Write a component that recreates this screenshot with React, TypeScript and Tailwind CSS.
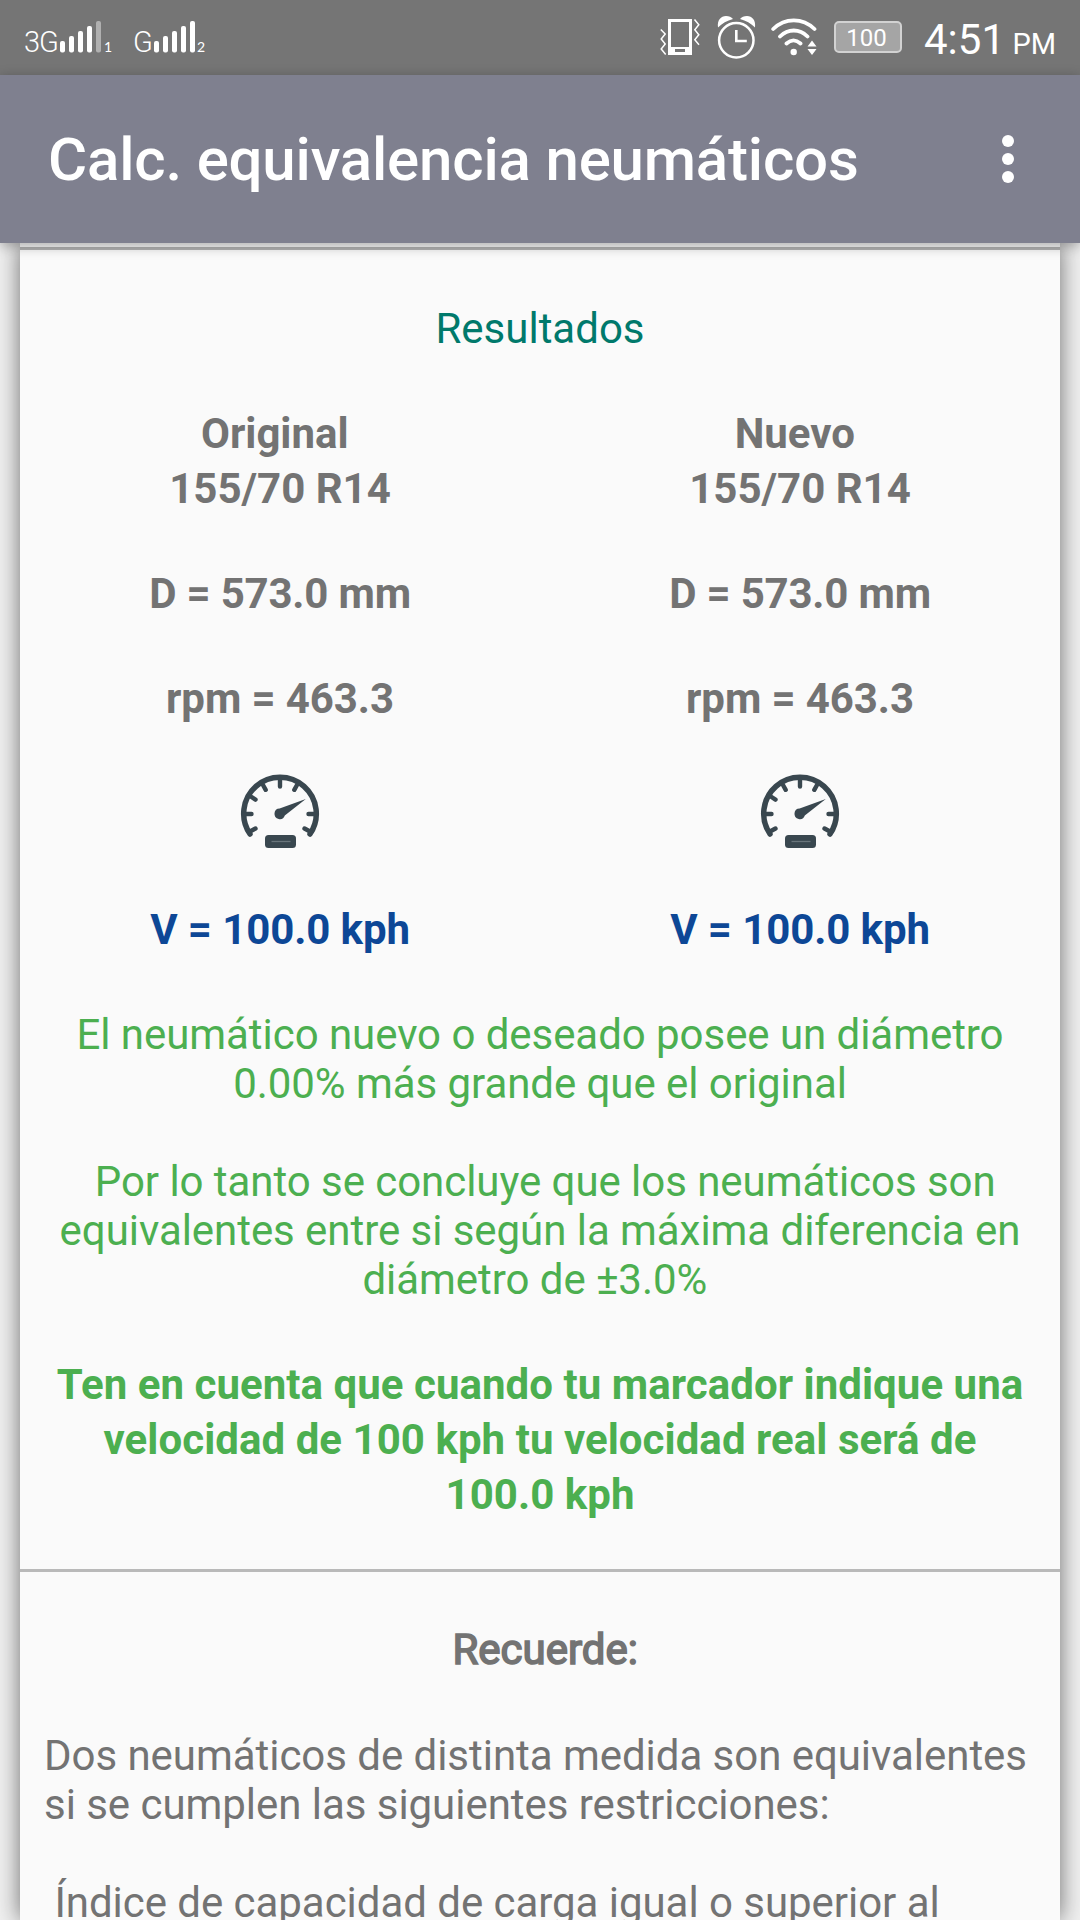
import type { ReactNode } from "react";

type Tyre = {
  title: string;
  size: string;
  diameter: string;
  rpm: string;
  speed: string;
};

const tyres: Tyre[] = [
  { title: "Original\u00a0", size: "155/70 R14", diameter: "D = 573.0 mm", rpm: "rpm = 463.3", speed: "V = 100.0 kph" },
  { title: "Nuevo\u00a0", size: "155/70 R14", diameter: "D = 573.0 mm", rpm: "rpm = 463.3", speed: "V = 100.0 kph" },
];

function SignalBars({ level }: { level: number }) {
  return (
    <svg width="41" height="32" viewBox="0 0 41 32" className="shrink-0">
      {[0, 1, 2, 3, 4].map((i) => (
        <rect
          key={i}
          x={i * 9}
          y={20 - i * 5}
          width="5"
          height={11.5 + i * 5}
          rx="2"
          fill={i < level ? "#fff" : "#b0b0b0"}
        />
      ))}
    </svg>
  );
}

function VibrateIcon() {
  return (
    <svg width="40" height="44" viewBox="0 0 40 44" fill="none" className="shrink-0">
      <path fill="#fff" fillRule="evenodd" d="M8 4h24v36H8zM11 7v25h18V7zM15 34v3h10v-3z" />
      <path stroke="#fff" strokeWidth="1.5" d="M.8 14.5l4.400 4.500-4 5 4 5-4 5 4.500 5.500M34.500 4.500l4.300 5.200-4 5 4 5-4 5 4.200 5" />
    </svg>
  );
}

function AlarmIcon() {
  return (
    <svg width="39" height="44" viewBox="0 0 39 44" fill="none" className="shrink-0">
      <circle cx="19.300" cy="25.300" r="17.200" stroke="#fff" strokeWidth="2.500" />
      <path stroke="#fff" strokeWidth="2.600" d="M19.300 15v11h10.500" />
      <path fill="#fff" d="M1 12.500C0 5 4 1 9 1c3 0 5.500 1.200 7 3C10 5.500 5 8.500 1 12.500zM38 12.500C39 5 35 1 30 1c-3 0-5.500 1.200-7 3 6 1.500 11 4.500 15 8.500z" />
    </svg>
  );
}

function WifiIcon() {
  return (
    <svg width="46" height="44" viewBox="0 0 46 44" fill="none" className="shrink-0">
      <path stroke="#fff" strokeWidth="3.800" strokeLinecap="round" d="M2.200 14C14 2.500 31.500 2.500 43.500 14M9 21.500c8-8 19.500-8 27.500 0M15.500 28.500c4.500-4 9.500-4 14 0" />
      <circle cx="22.700" cy="37" r="3.200" fill="#fff" />
      <path fill="#fff" d="M41 25.500l4.500 6h-9zM41 40l4.500-6h-9z" />
    </svg>
  );
}

function GaugeIcon() {
  return (
    <svg width="80" height="76" viewBox="0 0 80 76" fill="none" stroke="#39474f" className="mx-auto block">
      <path strokeWidth="5.500" strokeLinecap="round" d="M10 60A36.300 36.300 0 1 1 70 60" />
      <path
        strokeWidth="4.400"
        strokeLinecap="round"
        d="M40 5v7.500M23 11l2.700 4.800M57 11l-2.700 4.800M10 22l5.500 3.600M4 40h7.500M76 40h-7.500M10 57.500l5.500-3M70 57.500l-5.500-3"
      />
      <path fill="#39474f" stroke="none" d="M65.800 25L44.800 41.500a5.300 5.300 0 1 1-5.200-7z" />
      <rect x="25" y="61" width="31" height="13" rx="3.500" fill="#39474f" stroke="none" />
      <path stroke="#69757b" strokeWidth="1.300" d="M31.500 67.500h19" />
    </svg>
  );
}

function StatusBar() {
  return (
    <div className="flex h-[75px] items-start bg-[#757575] text-white">
      <span className="mt-[24px] ml-[24px] w-[36px] text-[29px] leading-[36px] font-light tracking-[-1px]">3G</span>
      <div className="mt-[21px]"><SignalBars level={4} /></div>
      <span className="mt-[37px] ml-[3px] w-[29px] font-['Lato'] text-[14px] leading-[20px]">1</span>
      <span className="mt-[24px] w-[20px] text-[29px] leading-[36px] font-light">G</span>
      <div className="mt-[21px] ml-px"><SignalBars level={5} /></div>
      <span className="mt-[37px] ml-[2px] font-['Lato'] text-[14px] leading-[20px]">2</span>

      <div className="mt-[15px] ml-auto flex pr-[17px]">
        <VibrateIcon />
        <div className="mr-[15px] ml-[17px]">
          <AlarmIcon />
        </div>
        <WifiIcon />
      </div>
      <div className="mt-[21px] flex h-8 w-[68px] items-center justify-center rounded-[5px] border-2 border-[#d2d2d2] bg-[#a5a5a5] pt-px pr-[3px] text-[24px] leading-none">
        100
      </div>
      <div className="mt-[15px] ml-[22px] flex w-[156px] items-baseline">
        <span className="text-[42px] leading-[49px]">4:51</span>
        <span className="mr-[24px] ml-auto text-[29px] leading-[34px]">PM</span>
      </div>
    </div>
  );
}

function Toolbar() {
  return (
    <div className="relative z-10 flex h-[168px] items-center justify-between bg-[#7f808f] pr-[66px] pl-12 text-white shadow-[0_3px_12px_rgba(0,0,0,0.32)]">
      <h1 className="pt-[2px] text-[60px] leading-[70px] font-medium tracking-[-0.18px]">Calc. equivalencia neumáticos</h1>
      <svg width="12" height="50" viewBox="0 0 12 50" fill="#fff">
        <circle cx="6" cy="7" r="6" />
        <circle cx="6" cy="25" r="6" />
        <circle cx="6" cy="43" r="6" />
      </svg>
    </div>
  );
}

function TyreColumn({ tyre }: { tyre: Tyre }) {
  return (
    <div className="w-1/2 leading-[55px] font-bold">
      <div>{tyre.title}</div>
      <div>{tyre.size}</div>
      <div className="mt-[50px] tracking-[-0.2px]">{tyre.diameter}</div>
      <div className="mt-[50px] tracking-[-0.1px]">{tyre.rpm}</div>
      <div className="mt-[48px] h-[76px]">
        <GaugeIcon />
      </div>
      <div className="mt-[52px] tracking-[-0.1px] text-[#0d4796]">{tyre.speed}</div>
    </div>
  );
}

function Line({ children }: { children: ReactNode }) {
  return <span className="block whitespace-pre">{children}</span>;
}

export default function App() {
  return (
    <div className="flex h-[1920px] w-[1080px] flex-col overflow-hidden bg-[#f0f0f0] font-['Roboto',sans-serif] text-[42px] leading-[49px] text-[#737373]">
      <StatusBar />
      <Toolbar />

      <main className="mx-5 h-[1677px] bg-[#fafafa] pt-1 text-center shadow-[0_0_22px_rgba(0,0,0,0.55)]">
        <div className="h-[3px] bg-[#b3b3b3]" />

        <section className="pt-[54px]">
          <h2 className="text-[#00796b]">Resultados</h2>
          <div className="mt-[53px] flex">
            {tyres.map((tyre) => (
              <TyreColumn key={tyre.title} tyre={tyre} />
            ))}
          </div>

          <div className="text-[#4caf50]">
            <p className="mt-[53px] tracking-[-0.05px]">
              <Line>El neumático nuevo o deseado posee un diámetro</Line>
              <Line>0.00% más grande que el original</Line>
            </p>
            <p className="mt-[49px] tracking-[-0.05px]">
              <Line> Por lo tanto se concluye que los neumáticos son</Line>
              <Line>equivalentes entre si según la máxima diferencia en</Line>
              <Line>diámetro de ±3.0% </Line>
            </p>
            <p className="mt-[53px] leading-[55px] font-bold tracking-[0.04px]">
              <Line>Ten en cuenta que cuando tu marcador indique una</Line>
              <Line>velocidad de 100 kph tu velocidad real será de</Line>
              <Line>100.0 kph</Line>
            </p>
          </div>
        </section>

        <div className="mt-[47px] h-[3px] bg-[#b9b9b9]" />

        <section className="pt-[50px]">
          {/* lighter than the bold weight: regular glyphs thickened by a stroke */}
          <h2 className="leading-[55px] [-webkit-text-stroke:1.6px_#737373]">&nbsp;Recuerde:</h2>
          <div className="mt-[54px] pl-[24px] text-left tracking-[-0.04px]">
            <Line>Dos neumáticos de distinta medida son equivalentes</Line>
            <Line>si se cumplen las siguientes restricciones:</Line>
            <div className="mt-[49px]">
              <Line> Índice de capacidad de carga igual o superior al</Line>
            </div>
          </div>
        </section>
      </main>
    </div>
  );
}
